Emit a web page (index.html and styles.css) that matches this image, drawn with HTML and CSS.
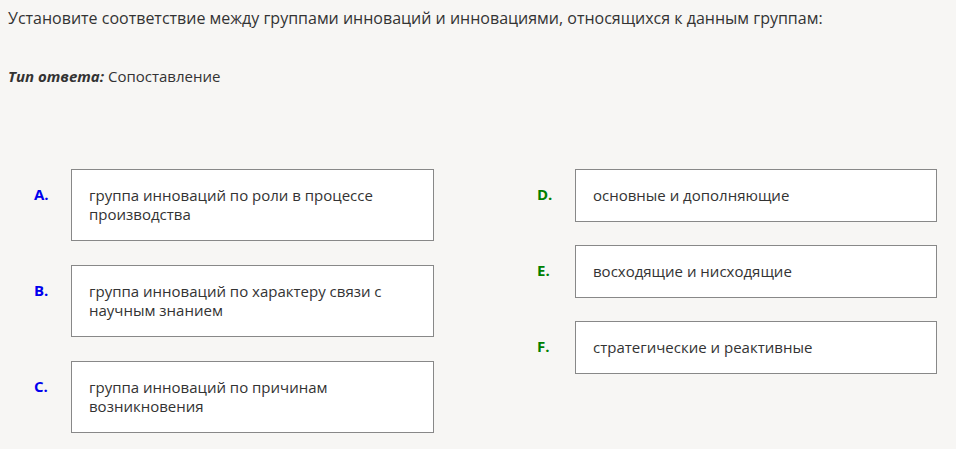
FILE: index.html
```html
<!DOCTYPE html>
<html lang="ru">
<head>
    <meta charset="UTF-8">
    <title>Сопоставление</title>
    <link rel="stylesheet" href="styles.css">
</head>
<body>
    <div class="question">
        <p class="question-text">Установите соответствие между группами инноваций и инновациями, относящихся к данным группам:</p>
        <p class="answer-type"><b><i>Тип ответа:</i></b> Сопоставление</p>

        <div class="match">
            <div class="match-col left">
                <div class="match-row">
                    <span class="letter">A.</span>
                    <div class="match-box">группа инноваций по роли в процессе производства</div>
                </div>
                <div class="match-row">
                    <span class="letter">B.</span>
                    <div class="match-box">группа инноваций по характеру связи с научным знанием</div>
                </div>
                <div class="match-row">
                    <span class="letter">C.</span>
                    <div class="match-box">группа инноваций по причинам возникновения</div>
                </div>
            </div>
            <div class="match-col right">
                <div class="match-row">
                    <span class="letter">D.</span>
                    <div class="match-box">основные и дополняющие</div>
                </div>
                <div class="match-row">
                    <span class="letter">E.</span>
                    <div class="match-box">восходящие и нисходящие</div>
                </div>
                <div class="match-row">
                    <span class="letter">F.</span>
                    <div class="match-box">стратегические и реактивные</div>
                </div>
            </div>
        </div>
    </div>
</body>
</html>
```

FILE: styles.css
```css
body {
    margin: 0;
    background-color: #f7f6f4;
    font-family: "Open Sans", "Noto Sans", sans-serif;
    color: #333;
}

.question {
    padding: 8px 8px 0 8px;
}

.question-text {
    margin: 0;
    font-size: 16px;
    line-height: 20px;
}

.answer-type {
    margin: 38px 0 0 0;
    font-size: 15px;
    line-height: 20px;
}

.match {
    display: flex;
    margin-top: 83px;
    padding-left: 26px;
}

.match-col {
    display: flex;
    flex-direction: column;
}

.match-col.left {
    width: 400px;
    gap: 24px;
}

.match-col.right {
    margin-left: 103px;
    width: 400px;
    gap: 23px;
}

.match-row {
    display: flex;
    align-items: flex-start;
}

.letter {
    width: 37px;
    padding-top: 16px;
    font-size: 15px;
    font-weight: bold;
    line-height: 19px;
}

.left .letter {
    color: #0000ee;
}

.right .letter {
    width: 38px;
    color: #008000;
}

.match-box {
    box-sizing: border-box;
    width: 363px;
    padding: 16px 17px;
    background: #fff;
    border: 1px solid #888;
    font-size: 15px;
    line-height: 19px;
}

.right .match-box {
    width: 362px;
}
```
